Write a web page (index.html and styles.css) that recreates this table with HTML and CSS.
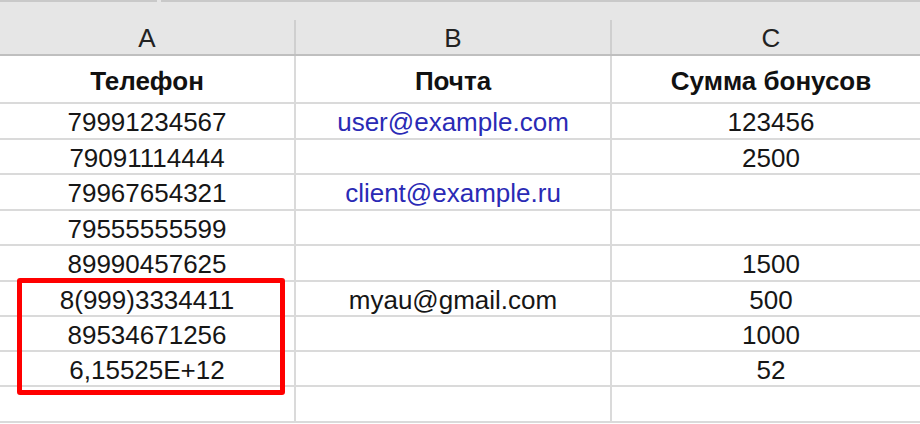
FILE: index.html
```html
<!DOCTYPE html>
<html lang="ru">
<head>
<meta charset="utf-8">
<title>Таблица</title>
<link rel="stylesheet" href="styles.css">
</head>
<body>
<div class="sheet">
  <div class="colhead">
    <div class="topstrip"><span class="seg seg1"></span><span class="seg seg2"></span></div>
    <div class="row letters">
      <div class="cell">A</div>
      <div class="cell">B</div>
      <div class="cell">C</div>
    </div>
  </div>
  <div class="row titles">
    <div class="cell">Телефон</div>
    <div class="cell">Почта</div>
    <div class="cell">Сумма бонусов</div>
  </div>
  <div class="row r36"><div class="cell">79991234567</div><div class="cell link">user@example.com</div><div class="cell">123456</div></div>
  <div class="row r35"><div class="cell">79091114444</div><div class="cell"></div><div class="cell">2500</div></div>
  <div class="row r36"><div class="cell">79967654321</div><div class="cell link">client@example.ru</div><div class="cell"></div></div>
  <div class="row r35"><div class="cell">79555555599</div><div class="cell"></div><div class="cell"></div></div>
  <div class="row r36"><div class="cell">89990457625</div><div class="cell"></div><div class="cell">1500</div></div>
  <div class="row r35"><div class="cell">8(999)3334411</div><div class="cell">myau@gmail.com</div><div class="cell">500</div></div>
  <div class="row r35"><div class="cell">89534671256</div><div class="cell"></div><div class="cell">1000</div></div>
  <div class="row r35"><div class="cell">6,15525E+12</div><div class="cell"></div><div class="cell">52</div></div>
  <div class="row r36"><div class="cell"></div><div class="cell"></div><div class="cell"></div></div>
  <div class="highlight"></div>
</div>
</body>
</html>
```
FILE: styles.css
```css
html, body {
  margin: 0;
  padding: 0;
  background: #ffffff;
}
body {
  width: 920px;
  height: 424px;
  overflow: hidden;
  font-family: "Liberation Sans", Arial, sans-serif;
  color: #161616;
}
.sheet {
  position: relative;
  width: 920px;
}
.colhead {
  background: #e6e6e6;
}
.topstrip {
  height: 20px;
  display: flex;
  align-items: flex-start;
}
.seg {
  display: block;
  height: 2px;
  background: #c9c9c9;
}
.seg1 { width: 157px; }
.seg2 { margin-left: 4px; flex: 1; }
.row {
  display: grid;
  grid-template-columns: 296px 316px 318px;
  box-sizing: border-box;
  border-bottom: 2px solid #dadada;
}
.cell {
  display: flex;
  align-items: center;
  justify-content: center;
  font-size: 26px;
  white-space: nowrap;
  border-right: 2px solid #dadada;
  box-sizing: border-box;
  padding-top: 3px;
}
.cell:last-child {
  border-right: none;
}
.letters {
  height: 36px;
  border-bottom: 2px solid #bfbfbf;
}
.letters .cell {
  font-size: 26px;
  color: #222222;
  border-right-color: #cfcfcf;
  padding-top: 2px;
}
.titles {
  height: 48px;
}
.titles .cell {
  font-weight: bold;
  color: #111111;
  padding-top: 4px;
}
.r36 { height: 36px; }
.r35 { height: 35px; }
.link {
  color: #2a2ab5;
}
.highlight {
  position: absolute;
  left: 17px;
  top: 278px;
  width: 268px;
  height: 117px;
  box-sizing: border-box;
  border: 5px solid #ff0000;
  border-radius: 3px;
}
```
